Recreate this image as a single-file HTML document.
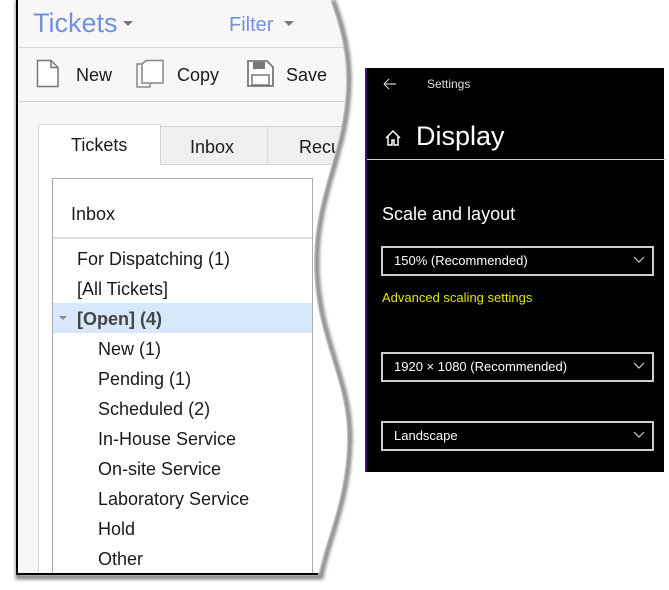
<!DOCTYPE html>
<html><head><style>
*{margin:0;padding:0;box-sizing:border-box}
body{width:669px;height:590px;background:#fff;position:relative;overflow:hidden;font-family:"Liberation Sans","DejaVu Sans",sans-serif}
#lp{position:absolute;left:0;top:0;width:360px;height:580px;clip-path:path("M16,0 L330,0 C345,40 348,70 345,100 C340,160 312,200 314,270 C316,340 348,380 347,440 C346,500 325,540 318,575 L16,575 Z");background:#f8f7f6}
.a{position:absolute;white-space:nowrap}
.t{font-size:18px;color:#1a1a1a}
</style></head><body>
<svg class="a" style="left:0;top:0" width="669" height="590">
<defs><filter id="b"><feGaussianBlur stdDeviation="1.5"/></filter></defs>
<path d="M333,0 C348,40 351,70 348,100 C343,160 315,200 317,270 C319,340 351,380 350,440 C349,500 328,540 321,577 L18,577 L18,0" fill="none" stroke="#888" stroke-width="5" filter="url(#b)"/>
</svg>
<div id="lp">
<div class="a" style="left:33px;top:8px;font-size:27px;color:#7090e0">Tickets</div>
<div class="a" style="left:123px;top:21px;border:5px solid transparent;border-top:5px solid #777"></div>
<div class="a" style="left:229px;top:14px;font-size:20px;color:#7090e0">Filter</div>
<div class="a" style="left:284px;top:21px;border:5px solid transparent;border-top:5px solid #777"></div>
<div class="a" style="left:16px;top:47px;width:340px;height:1px;background:#d6d6d6"></div>
<svg class="a" style="left:36px;top:59px" width="150" height="30">
<path d="M1.5,1.5 H15 L22,8.5 V27.5 H1.5 Z M15,1.5 V8.5 H22" fill="#fff" stroke="#777" stroke-width="1.5"/>
<path d="M106,5 H101 V28 H114 V24" fill="none" stroke="#888" stroke-width="1.5"/>
<path d="M110,1.5 H117 L127,1.5 V24 H106 V5 Z" fill="#fff" stroke="#888" stroke-width="1.5"/>
</svg>
<svg class="a" style="left:247px;top:60px" width="28" height="28">
<path d="M1,1 H20 L26,7 V26 H1 Z" fill="#fff" stroke="#777" stroke-width="1.8"/>
<rect x="6" y="2" width="12" height="7" fill="#777"/>
<rect x="5" y="15" width="17" height="10" fill="#fff" stroke="#777" stroke-width="1.5"/>
</svg>
<div class="a t" style="left:76px;top:65px">New</div>
<div class="a t" style="left:177px;top:65px">Copy</div>
<div class="a t" style="left:286px;top:65px">Save</div>
<div class="a" style="left:16px;top:101px;width:340px;height:1px;background:#d6d6d6"></div>
<div class="a" style="left:38px;top:124px;width:123px;height:42px;background:#fff;border:1px solid #d6d6d6;border-bottom:none"></div>
<div class="a" style="left:160px;top:126px;width:108px;height:39px;background:#efefef;border:1px solid #d6d6d6"></div>
<div class="a" style="left:267px;top:126px;width:100px;height:39px;background:#efefef;border:1px solid #d6d6d6"></div>
<div class="a" style="left:38px;top:165px;width:330px;height:420px;background:#fff;border-left:1px solid #d6d6d6"></div>
<div class="a" style="left:160px;top:164px;width:210px;height:1px;background:#d6d6d6"></div>
<div class="a t" style="left:71px;top:135px">Tickets</div>
<div class="a t" style="left:190px;top:137px">Inbox</div>
<div class="a t" style="left:299px;top:137px">Recu</div>
<div class="a" style="left:52px;top:178px;width:261px;height:400px;border:1px solid #aaa;background:#fff"></div>
<div class="a" style="left:53px;top:237px;width:259px;height:2px;background:#ddd"></div>
<div class="a t" style="left:71px;top:204px">Inbox</div>
<div class="a" style="left:53px;top:303px;width:259px;height:30px;background:#d6e8fa"></div>
<div class="a" style="left:59px;top:316px;border:4px solid transparent;border-top:4px solid #888"></div>
<div class="a t" style="left:77px;top:249px">For Dispatching (1)</div>
<div class="a t" style="left:77px;top:279px">[All Tickets]</div>
<div class="a t" style="left:77px;top:309px;font-weight:bold;color:#444">[Open] (4)</div>
<div class="a t" style="left:98px;top:339px">New (1)</div>
<div class="a t" style="left:98px;top:369px">Pending (1)</div>
<div class="a t" style="left:98px;top:399px">Scheduled (2)</div>
<div class="a t" style="left:98px;top:429px">In-House Service</div>
<div class="a t" style="left:98px;top:459px">On-site Service</div>
<div class="a t" style="left:98px;top:489px">Laboratory Service</div>
<div class="a t" style="left:98px;top:519px">Hold</div>
<div class="a t" style="left:98px;top:549px">Other</div>
<div class="a" style="left:16px;top:0;width:2px;height:575px;background:#000"></div>
<div class="a" style="left:16px;top:573px;width:340px;height:2px;background:#000"></div>
</div>
<div class="a" style="left:365px;top:68px;width:299px;height:404px;background:#000;border-left:2px solid #3a1870;color:#fff">
<svg class="a" style="left:16px;top:10px" width="14" height="12"><path d="M1,6 H13 M1,6 L6,1 M1,6 L6,11" stroke="#ccc" stroke-width="1.2" fill="none"/></svg>
<div class="a" style="left:60px;top:9px;font-size:12px;color:#ddd">Settings</div>
<svg class="a" style="left:17px;top:61px" width="18" height="18"><path d="M2,9 L9,2 L16,9 M4,7 V16 H8 V11 H10 V16 H14 V7" stroke="#fff" stroke-width="1.5" fill="none"/></svg>
<div class="a" style="left:49px;top:53px;font-size:27px">Display</div>
<div class="a" style="left:0;top:91px;width:299px;height:1px;background:#ccc"></div>
<div class="a" style="left:15px;top:136px;font-size:18px">Scale and layout</div>
<div class="a" style="left:14px;top:178px;width:273px;height:30px;border:2px solid #ccc"></div>
<div class="a" style="left:27px;top:185px;font-size:13px">150% (Recommended)</div>
<div class="a" style="left:15px;top:222px;font-size:13px;color:#e6e600">Advanced scaling settings</div>
<div class="a" style="left:14px;top:284px;width:273px;height:30px;border:2px solid #ccc"></div>
<div class="a" style="left:27px;top:291px;font-size:13px">1920 × 1080 (Recommended)</div>
<div class="a" style="left:14px;top:353px;width:273px;height:30px;border:2px solid #ccc"></div>
<div class="a" style="left:27px;top:360px;font-size:13px">Landscape</div>
<svg class="a" style="left:266px;top:188px" width="12" height="200">
<path d="M1,1 L6,6 L11,1 M1,107 L6,112 L11,107 M1,176 L6,181 L11,176" stroke="#ccc" stroke-width="1.2" fill="none"/></svg>
</div>
</body></html>
